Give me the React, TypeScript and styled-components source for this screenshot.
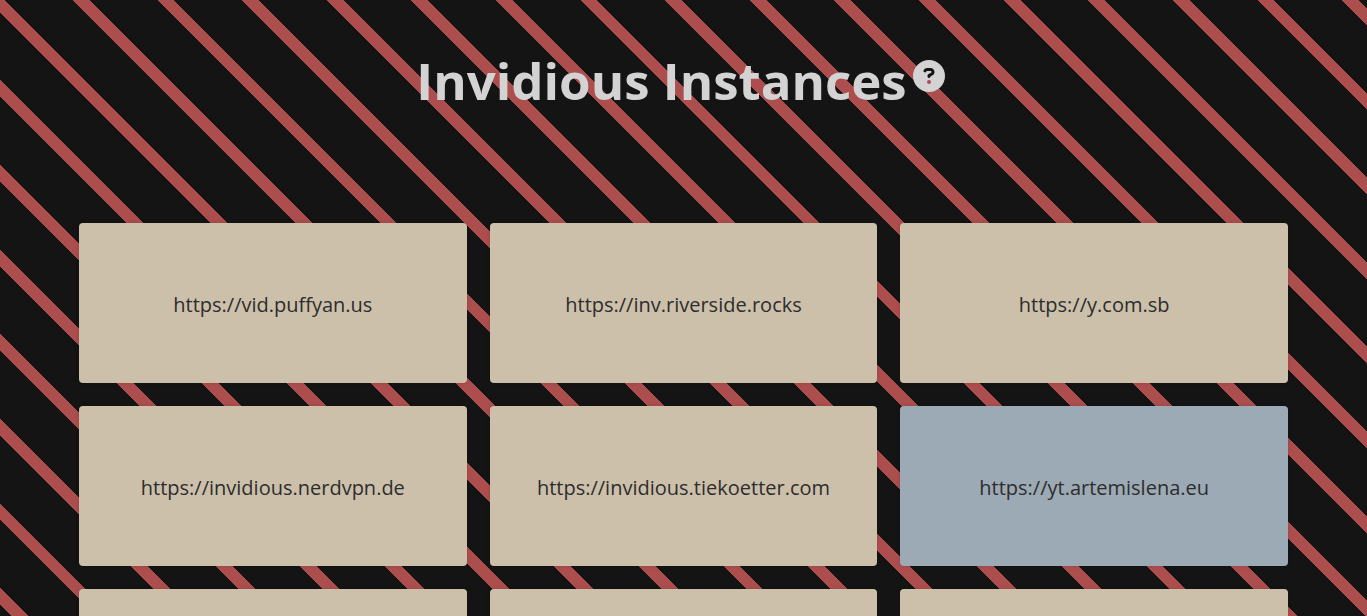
import React from "react";
import styled, { createGlobalStyle } from "styled-components";
import { FaCircleQuestion } from "react-icons/fa6";

const GlobalStyle = createGlobalStyle`
  html {
    scrollbar-width: none;
    background: #141414 repeating-linear-gradient(
      45deg,
      #141414 0 0.58%,
      #ad4e4e 0.58% 1.43%,
      #141414 1.43% 4.267%
    ) fixed;
  }

  body {
    margin: 0;
    font-family: "Open Sans", "Noto Sans", sans-serif;
  }
`;

const Page = styled.div`
  box-sizing: border-box;
  min-height: 100vh;
  padding: 40px 79px;
`;

const Header = styled.header`
  display: flex;
  justify-content: center;
  align-items: flex-start;
  gap: 6px;
  padding-right: 6px;
  margin-bottom: 103px;
`;

const Title = styled.h1`
  margin: 0;
  color: #d3d3d3;
  font-size: 51px;
  line-height: 80px;
  font-weight: 700;
`;

const HelpLink = styled.a`
  display: flex;
  margin-top: 20px;
  color: #d3d3d3;
  font-size: 32px;
`;

const Grid = styled.main`
  display: grid;
  grid-template-columns: repeat(3, minmax(0, 1fr));
  gap: 23px;
`;

const Card = styled.a<{ $highlighted?: boolean }>`
  box-sizing: border-box;
  display: flex;
  justify-content: center;
  align-items: center;
  height: 160px;
  padding-top: 4px;
  border-radius: 4px;
  background: ${({ $highlighted }) => ($highlighted ? "#9caab5" : "#ccc0ab")};
  box-shadow: 0 0 4px rgba(0, 0, 0, 0.15);
  color: #2d2d2d;
  font-size: 20px;
  line-height: 28px;
  text-decoration: none;
`;

const instances = [
  { url: "https://vid.puffyan.us" },
  { url: "https://inv.riverside.rocks" },
  { url: "https://y.com.sb" },
  { url: "https://invidious.nerdvpn.de" },
  { url: "https://invidious.tiekoetter.com" },
  { url: "https://yt.artemislena.eu", highlighted: true },
];

export default function App() {
  return (
    <>
      <GlobalStyle />
      <Page>
        <Header>
          <Title>Invidious Instances</Title>
          <HelpLink href="#help" aria-label="Help">
            <FaCircleQuestion />
          </HelpLink>
        </Header>
        <Grid>
          {instances.map(({ url, highlighted }) => (
            <Card key={url} href={url} $highlighted={highlighted}>
              {url}
            </Card>
          ))}
          <Card />
          <Card />
          <Card />
        </Grid>
      </Page>
    </>
  );
}
